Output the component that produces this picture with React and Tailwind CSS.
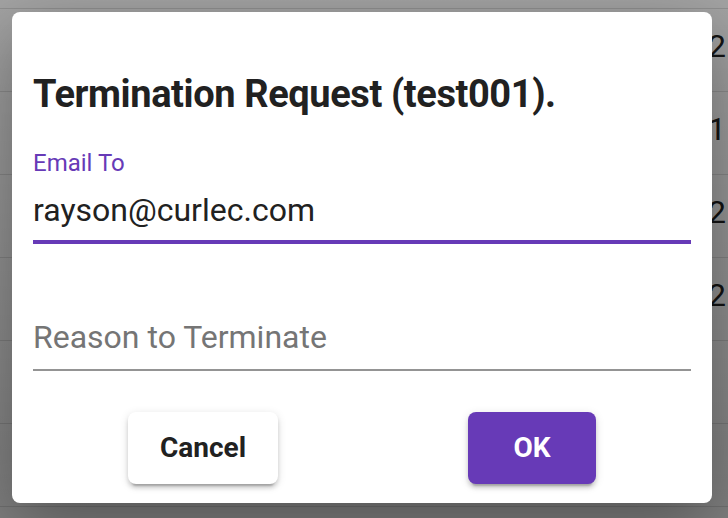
import React from 'react';

const rows = ['32', '1', '32', '32', '', ''];

const TerminationDialog = () => {
    return (
        <div className="w-[700px] h-[491px] bg-white rounded-[8px] shadow-[0_22px_70px_rgba(0,0,0,0.35)] px-[21px] flex flex-col">
            <h2 className="mt-[58px] text-[38px] leading-[48px] font-bold text-[#212121] tracking-[-0.4px]">
                Termination Request (test001).
            </h2>

            {/* Email field */}
            <div className="mt-[31px] flex flex-col">
                <label className="text-[24px] leading-[28px] text-[#673ab7]">Email To</label>
                <div className="mt-[13px] pb-[10px] border-b-[4px] border-[#673ab7]">
                    <div className="text-[32px] leading-[40px] text-[#212121]">rayson@curlec.com</div>
                </div>
            </div>

            {/* Reason field */}
            <div className="mt-[73px] pb-[12px] border-b-[2px] border-[#949494]">
                <div className="text-[32px] leading-[40px] text-[#757575]">Reason to Terminate</div>
            </div>

            <div className="mt-[41px] flex justify-around">
                <button className="w-[150px] h-[72px] rounded-[8px] bg-white text-[#212121] text-[28px] font-bold shadow-[0_6px_2px_-4px_rgba(0,0,0,0.2),0_4px_4px_0_rgba(0,0,0,0.14),0_2px_10px_0_rgba(0,0,0,0.12)]">
                    Cancel
                </button>
                <button className="w-[128px] h-[72px] rounded-[8px] bg-[#673ab7] text-white text-[28px] font-bold shadow-[0_6px_2px_-4px_rgba(0,0,0,0.2),0_4px_4px_0_rgba(0,0,0,0.14),0_2px_10px_0_rgba(0,0,0,0.12)]">
                    OK
                </button>
            </div>
        </div>
    );
};

const App = () => {
    return (
        <div className="relative w-[728px] h-[518px] overflow-hidden bg-white font-['Roboto',sans-serif]">
            {/* page behind the modal */}
            <div className="flex flex-col">
                <div className="h-[9px] border-b border-[#e0e0e0]"></div>
                {rows.map((r, i) => (
                    <div key={i} className="h-[83px] border-b border-[#e0e0e0] flex items-center justify-end pb-[8px] pr-[2px]">
                        <span className="text-[32px] text-[#212121] text-right">{r}</span>
                    </div>
                ))}
            </div>

            {/* backdrop */}
            <div className="absolute inset-0 bg-gradient-to-b from-black/[0.36] to-black/[0.5]"></div>

            <div className="absolute left-[12px] top-[12px]">
                <TerminationDialog />
            </div>
        </div>
    );
};

export default App;
